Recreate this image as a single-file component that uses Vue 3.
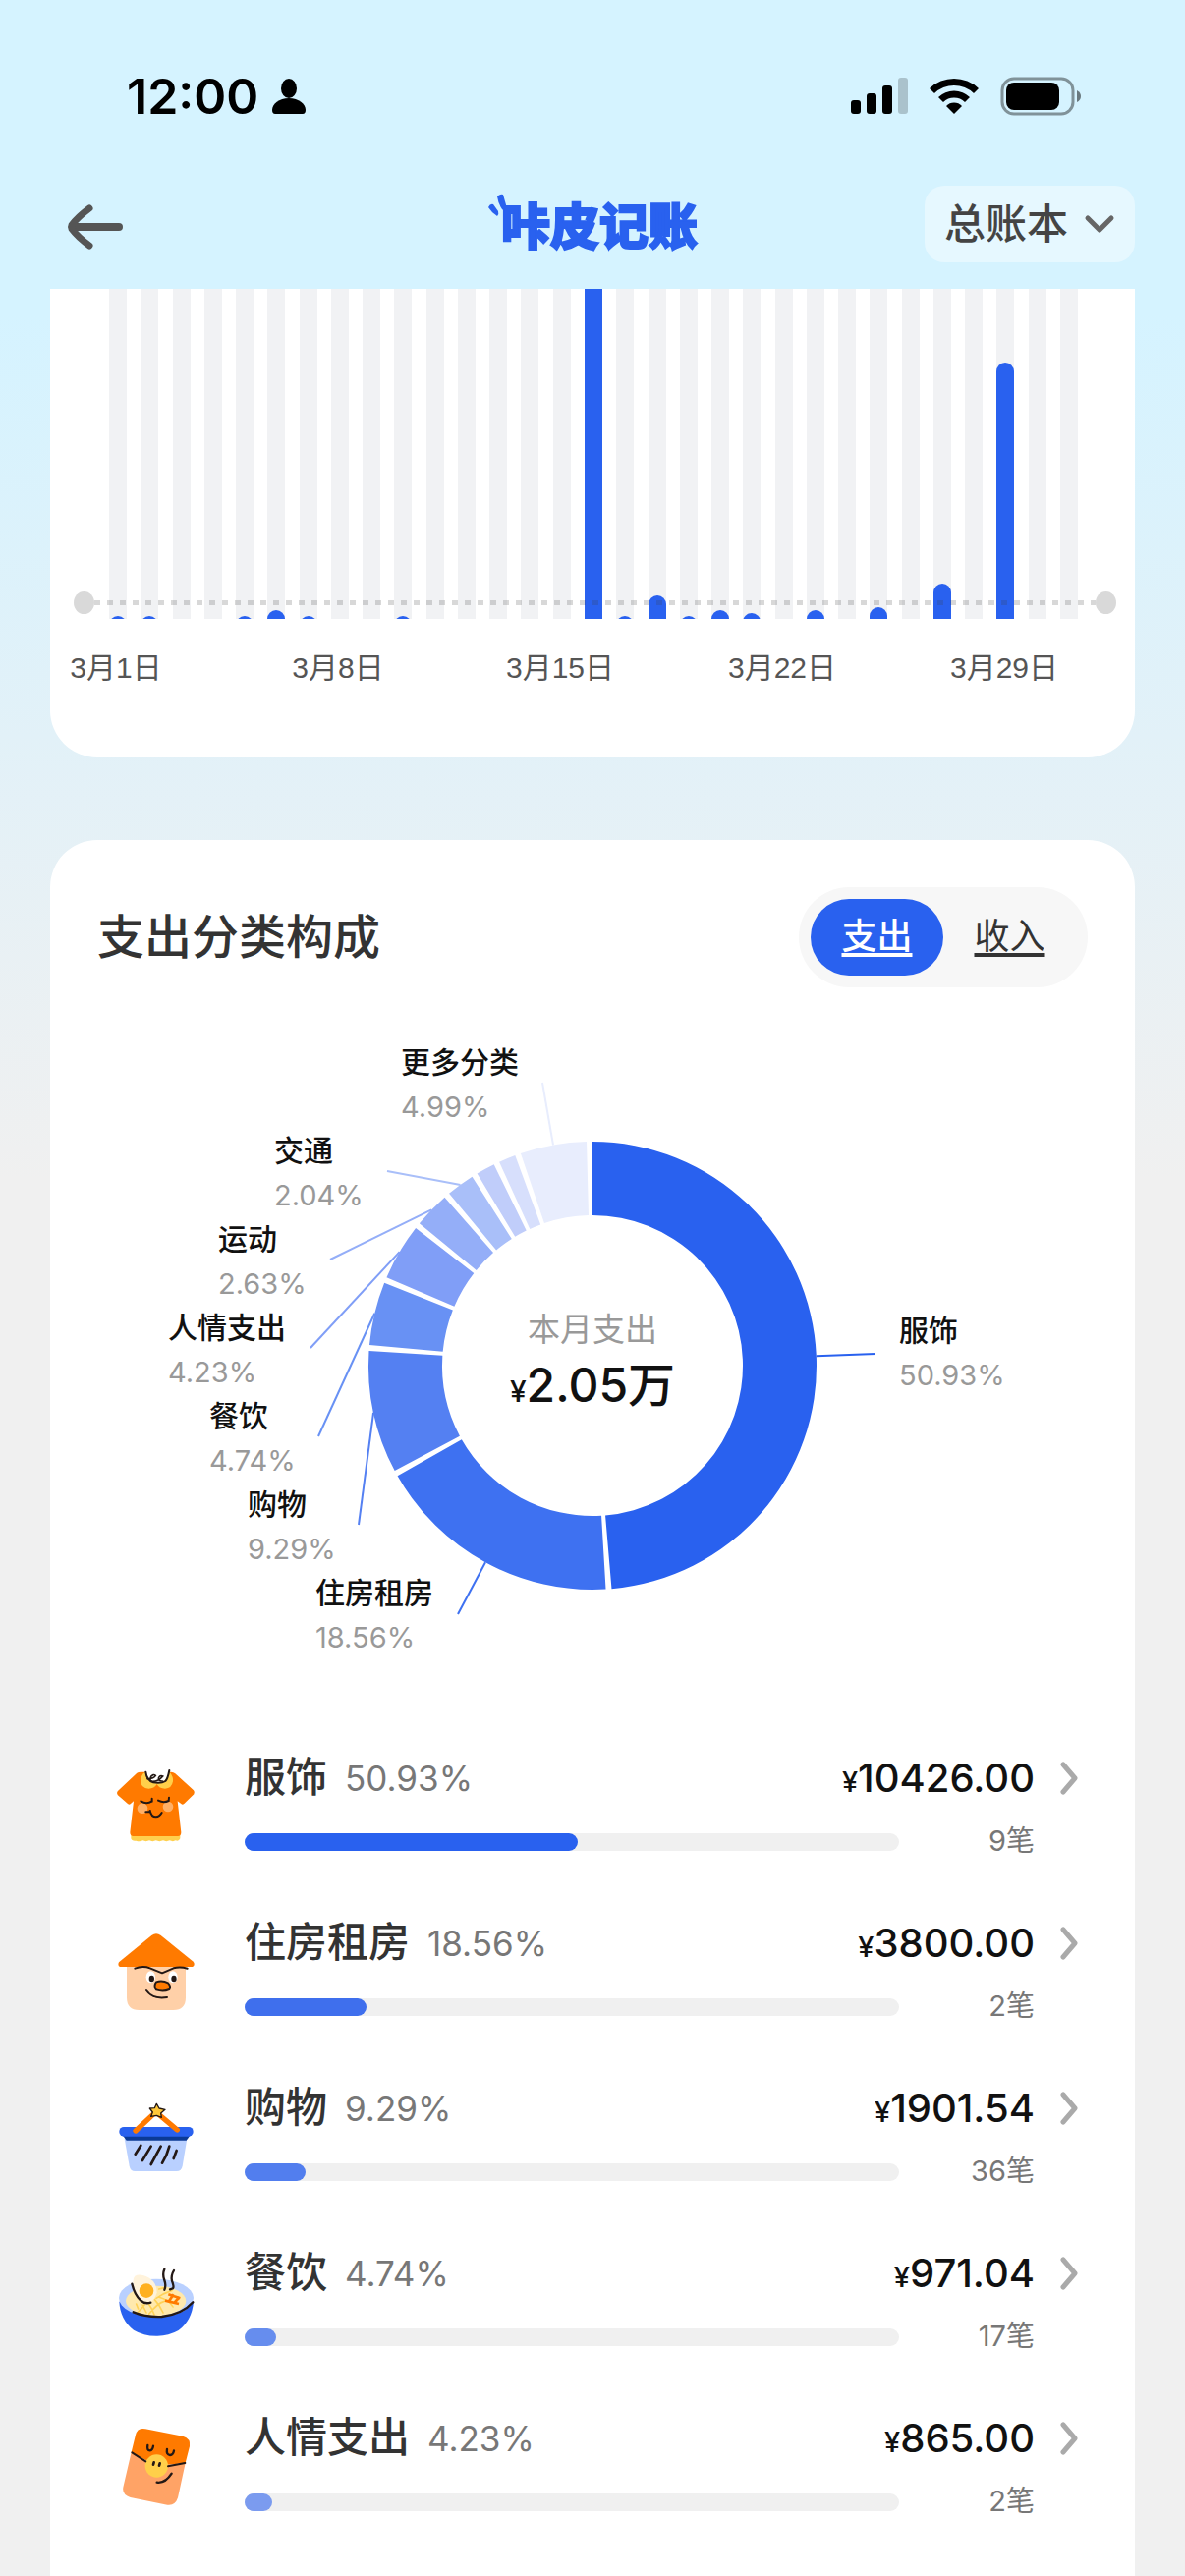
<script setup>
const DAYS = 31
const spend = { 1: 3, 2: 3, 5: 3, 6: 9, 7: 3, 10: 3, 16: 336, 17: 3, 18: 24, 19: 3, 20: 9, 21: 6, 23: 9, 25: 12, 27: 36, 29: 261 }
const bars = Array.from({ length: DAYS }, (_, i) => ({ day: i + 1, height: spend[i + 1] || 0 }))
const ticks = ['3月1日', '3月8日', '3月15日', '3月22日', '3月29日']

// Ring geometry, in chart units; each sweep is in degrees
const CX = 552
const CY = 385
const OUTER = 228
const INNER = 153
const GAP = 1.5

const slices = [
  { sweep: 175.1, color: '#2961ef', name: '服饰', pct: '50.93%', x: 864, y: 360, lx: 840, ly: 373 },
  { sweep: 63.9, color: '#3e71f1', name: '住房租房', pct: '18.56%', x: 270, y: 627, lx: 415, ly: 638 },
  { sweep: 31.8, color: '#5480f2', name: '购物', pct: '9.29%', x: 201, y: 537, lx: 314, ly: 547 },
  { sweep: 16.4, color: '#6891f4', name: '餐饮', pct: '4.74%', x: 162, y: 447, lx: 273, ly: 457 },
  { sweep: 14.7, color: '#809ef7', name: '人情支出', pct: '4.23%', x: 120, y: 357, lx: 265, ly: 367 },
  { sweep: 9.3, color: '#94aef8', name: '运动', pct: '2.63%', x: 171, y: 267, lx: 285, ly: 277 },
  { sweep: 7.3, color: '#a9bff9', name: '交通', pct: '2.04%', x: 228, y: 177, lx: 343, ly: 187 },
  { sweep: 4.9, color: '#c0cdfa' },
  { sweep: 4.4, color: '#d7dffc' },
  { sweep: 17.2, color: '#e8edfd', name: '更多分类', pct: '4.99%', x: 357, y: 87, lx: 501, ly: 97 },
]

const point = (deg, r) => {
  const a = (deg * Math.PI) / 180
  return [CX + r * Math.sin(a), CY - r * Math.cos(a)]
}

let cursor = 0
const ring = slices.map((s) => {
  const start = cursor
  const end = start + s.sweep
  cursor = end + GAP
  const large = s.sweep > 180 ? 1 : 0
  const d = `M${point(start, OUTER)} A${OUTER} ${OUTER} 0 ${large} 1 ${point(end, OUTER)} L${point(end, INNER)} A${INNER} ${INNER} 0 ${large} 0 ${point(start, INNER)} Z`
  const [mx, my] = point((start + end) / 2, OUTER)
  return { ...s, d, mx, my }
})
const labelled = ring.filter((s) => s.name)

const rows = [
  { icon: 'shirt', name: '服饰', pct: '50.93%', width: 50.93, color: '#2961ef', amount: '10426.00', count: '9笔' },
  { icon: 'house', name: '住房租房', pct: '18.56%', width: 18.56, color: '#3f6fed', amount: '3800.00', count: '2笔' },
  { icon: 'basket', name: '购物', pct: '9.29%', width: 9.29, color: '#527eee', amount: '1901.54', count: '36笔' },
  { icon: 'bowl', name: '餐饮', pct: '4.74%', width: 4.74, color: '#668dee', amount: '971.04', count: '17笔' },
  { icon: 'packet', name: '人情支出', pct: '4.23%', width: 4.23, color: '#7b9bef', amount: '865.00', count: '2笔' },
]
</script>

<template>
  <div class="page">
    <div class="status">
      <div class="clock">
        <span>12:00</span>
        <svg width="34" height="38" viewBox="0 0 34 38" aria-hidden="true">
          <ellipse cx="17" cy="11" rx="8" ry="10" />
          <path d="M0 33C0 27 7 21 17 21S34 27 34 33Q34 37 31 37H3Q0 37 0 33Z" />
        </svg>
      </div>
      <div class="radios">
        <svg width="58" height="38" viewBox="0 0 58 38" aria-hidden="true">
          <rect x="0" y="23" width="10" height="14" rx="3" />
          <rect x="16" y="16" width="10" height="21" rx="3" />
          <rect x="32" y="8" width="10" height="29" rx="3" />
          <rect x="48" y="0" width="10" height="37" rx="3" opacity="0.2" />
        </svg>
        <svg width="52" height="38" viewBox="0 0 52 38" aria-hidden="true">
          <path d="M1 11A36 36 0 0 1 51 11L46 16A29 29 0 0 0 6 16Z" />
          <path d="M10 20A23 23 0 0 1 42 20L37 25A16 16 0 0 0 15 25Z" />
          <path d="M18 29A11 11 0 0 1 34 29L26 37Z" />
        </svg>
        <svg width="83" height="40" viewBox="0 0 83 40" aria-hidden="true">
          <rect x="2" y="2" width="72" height="36" rx="12" fill="none" stroke="#000" stroke-width="3" opacity="0.4" />
          <rect x="6" y="6" width="54" height="28" rx="8" />
          <path d="M78 14Q82 16 82 20T78 26Z" opacity="0.5" />
        </svg>
      </div>
    </div>

    <header class="nav">
      <button class="back" type="button" aria-label="返回">
        <svg width="60" height="48" viewBox="0 0 60 48" fill="none" stroke="#555" stroke-width="8" stroke-linecap="round" stroke-linejoin="round">
          <path d="M54 24H8" />
          <path d="M24 5Q12 14 6 22Q5 24 6 26Q12 34 24 43" stroke-width="7" />
        </svg>
      </button>
      <h1 class="logo">
        <svg class="spark" width="22" height="24" viewBox="0 0 22 24" aria-hidden="true">
          <path d="M10 3Q13 0 16 1L20 15Q18 19 15 16Q11 10 10 3Z" />
          <path d="M1 14Q3 10 6 11L11 18Q12 21 10 23Q4 19 1 14Z" />
        </svg>
        <span>咔皮记账</span>
      </h1>
      <button class="ledger" type="button">
        总账本
        <svg width="32" height="20" viewBox="0 0 32 20" fill="none" stroke="#666" stroke-width="5" stroke-linecap="round" stroke-linejoin="round">
          <path d="M4 4L16 16L28 4" />
        </svg>
      </button>
    </header>

    <section class="card trend">
      <div class="plot">
        <div v-for="b in bars" :key="b.day" class="slot">
          <div v-if="b.height" class="bar" :style="{ height: b.height + 'px' }"></div>
        </div>
        <div class="average"></div>
      </div>
      <div class="ticks">
        <span v-for="t in ticks" :key="t" class="tick">{{ t }}</span>
      </div>
    </section>

    <section class="card breakdown">
      <div class="head">
        <h2>支出分类构成</h2>
        <div class="toggle">
          <button type="button" class="option active">支出</button>
          <button type="button" class="option">收入</button>
        </div>
      </div>

      <svg class="donut" viewBox="0 0 1104 749" role="img" aria-label="支出分类构成">
        <path v-for="(s, i) in ring" :key="i" :d="s.d" :fill="s.color" />
        <g v-for="s in labelled" :key="s.name">
          <line :x1="s.mx" :y1="s.my" :x2="s.lx" :y2="s.ly" :stroke="s.color" stroke-width="2" />
          <text class="slice-name" :x="s.x" :y="s.y">{{ s.name }}</text>
          <text class="slice-pct" :x="s.x" :y="s.y + 45">{{ s.pct }}</text>
        </g>
        <text class="total-label" :x="CX" y="360">本月支出</text>
        <text class="total" :x="CX" y="422"><tspan class="total-yen">¥</tspan>2.05万</text>
      </svg>

      <ul class="list">
        <li v-for="r in rows" :key="r.name">
          <a class="row" href="#">
            <svg v-if="r.icon === 'shirt'" class="icon" viewBox="102 99 270 270" aria-hidden="true">
              <path d="M160 318H310V334Q306 344 296 340Q288 345 278 340Q268 345 258 340Q247 345 236 340Q226 345 216 340Q206 345 196 340Q186 345 176 341Q162 343 160 334Z" fill="#ffd04d" />
              <path d="M178 134Q182 131 190 131H282Q290 131 295 136L351 187Q356 193 352 199L322 228Q317 232 313 228L302 220L313 315Q313 327 303 327H167Q157 327 157 315L168 220L158 229Q154 232 150 228L119 201Q115 195 119 190Z" fill="#ff7a00" />
              <path d="M191 148Q196 132 206 131H278Q290 146 288 160Q284 182 264 182Q246 182 239 168Q231 182 214 182Q190 180 189 158Z" fill="#ffcf4a" />
              <path d="M207 128Q206 163 240 165Q270 164 275 128Z" fill="#fff" />
              <circle cx="195" cy="242" r="16" fill="#ffb066" />
              <circle cx="273" cy="237" r="16" fill="#ffb066" />
              <g fill="none" stroke="#231815" stroke-width="6" stroke-linecap="round">
                <path d="M205 131Q208 157 228 163Q252 167 265 159Q272 152 277 126" />
                <path d="M210 152Q230 151 235 142Q228 136 221 145Q214 158 226 160Q244 160 257 144Q248 140 244 150Q244 160 256 159" stroke-width="5" />
                <path d="M190 220Q208 231 224 220M224 212V221M243 218Q260 227 275 219L276 209" />
                <path d="M205 253L217 253Q217 249 218 249Q222 268 236 268Q247 267 254 255" />
              </g>
            </svg>

            <svg v-else-if="r.icon === 'house'" class="icon" viewBox="102 603 270 270" aria-hidden="true">
              <path d="M147 715H327V820Q327 858 289 858H185Q147 858 147 820Z" fill="#ffd0a8" />
              <path d="M223 630Q237 619 251 630L350 710Q357 720 348 726H126Q118 722 123 712Z" fill="#ff7a00" />
              <ellipse cx="220" cy="757" rx="14" ry="18" fill="#fff" />
              <ellipse cx="288" cy="757" rx="14" ry="18" fill="#fff" />
              <ellipse cx="223" cy="762" rx="8" ry="10" fill="#231815" />
              <ellipse cx="291" cy="762" rx="8" ry="10" fill="#231815" />
              <g fill="none" stroke="#231815" stroke-width="6" stroke-linecap="round" stroke-linejoin="round">
                <path d="M172 731Q196 722 218 730L255 745L290 730Q310 725 332 731" />
                <path d="M237 772Q256 766 273 775Q283 785 277 795Q258 803 237 796Q228 784 237 772Z" fill="#ff7a00" />
                <path d="M207 798Q227 826 270 819" />
              </g>
            </svg>

            <svg v-else-if="r.icon === 'basket'" class="icon" viewBox="102 87 270 270" aria-hidden="true">
              <path d="M140 230H331L317 314Q314 330 299 330H172Q158 330 155 314Z" fill="#b9d0ff" />
              <path d="M134 220H341L329 236H146Z" fill="#0b3a96" />
              <rect x="124" y="195" width="226" height="29" rx="14" fill="#2961ef" />
              <path d="M174 207L236 149L301 204" fill="none" stroke="#ff7a00" stroke-width="16" stroke-linecap="round" stroke-linejoin="round" />
              <path d="M238 124L246 138L264 142L251 153L253 166L238 160L221 163L226 150L217 138L232 137Z" fill="#ffc738" stroke="#231815" stroke-width="4" stroke-linejoin="round" />
              <path d="M190 251L173 278M221 254L195 297M251 254L221 309M277 254Q270 282 255 305M299 267L290 291" fill="none" stroke="#231815" stroke-width="8" stroke-linecap="round" />
            </svg>

            <svg v-else-if="r.icon === 'bowl'" class="icon" viewBox="102 591 270 270" aria-hidden="true">
              <path d="M124 728H351Q346 785 305 816Q273 834 237 833Q198 833 168 815Q127 783 124 728Z" fill="#2961ef" />
              <ellipse cx="237" cy="717" rx="114" ry="58" fill="#b9d0ff" />
              <ellipse cx="236" cy="726" rx="92" ry="46" fill="#ffe9ad" />
              <path d="M176 735L182 750M195 738L207 762M212 732Q224 748 231 768M232 722Q247 738 258 762M244 714Q278 724 288 744M180 762Q196 745 201 738M215 766Q240 733 262 727M237 718Q260 702 285 694M245 690L262 686" fill="none" stroke="#ffd257" stroke-width="5" stroke-linecap="round" />
              <path d="M172 650Q187 641 216 656Q239 671 239 700Q233 728 211 732Q187 730 174 700Q159 663 172 650Z" fill="#fff3dc" />
              <circle cx="207" cy="695" r="22" fill="#ffb01f" />
              <path d="M274 706L310 718M264 725L306 735M290 706L274 730M308 714L292 732" stroke="#ff7a00" stroke-width="8" />
              <g fill="none" stroke="#231815" stroke-width="7" stroke-linecap="round">
                <path d="M163 674Q171 707 189 724Q203 737 220 731" />
                <path d="M167 760Q205 776 254 774Q317 767 349 730" />
                <path d="M262 629Q255 645 262 663Q268 680 262 692M291 633Q281 649 285 665Q292 683 288 688L279 691" />
              </g>
            </svg>

            <svg v-else class="icon" viewBox="102 195 270 270" aria-hidden="true">
              <path d="M174 235Q180 211 204 217L318 239Q343 246 339 270L326 321L238 330L161 288Z" fill="#ff7a00" />
              <path d="M161 288L205 315L238 330L326 321L303 427Q295 452 271 449L158 426Q132 418 136 395Z" fill="#ffa366" />
              <circle cx="238" cy="330" r="35" fill="#ffcf4a" />
              <g fill="none" stroke="#231815" stroke-width="7" stroke-linecap="round">
                <path d="M163 289L205 316M273 331L325 321" stroke-width="6" />
                <path d="M211 267Q208 283 218 283Q226 282 228 269M270 279Q267 296 279 297Q289 296 291 283" />
                <path d="M230 319L228 326M248 322L246 329" stroke-width="8" />
                <path d="M239 380Q264 384 284 353" />
              </g>
            </svg>

            <div class="body">
              <div class="line top">
                <span class="name">{{ r.name }}</span>
                <span class="pct">{{ r.pct }}</span>
                <span class="amount"><small>¥</small>{{ r.amount }}</span>
                <svg class="chevron" width="18" height="34" viewBox="0 0 18 34" fill="none" stroke="#aaa" stroke-width="5" stroke-linecap="round" stroke-linejoin="round" aria-hidden="true">
                  <path d="M3 3L15 17L3 31" />
                </svg>
              </div>
              <div class="line bottom">
                <div class="track">
                  <div class="fill" :style="{ width: r.width + '%', background: r.color }"></div>
                </div>
                <span class="count">{{ r.count }}</span>
              </div>
            </div>
          </a>
        </li>
      </ul>
    </section>
  </div>
</template>

<style>
body {
  background: #f0f0f0;
}
</style>

<style scoped>
.page {
  box-sizing: border-box;
  min-height: 100vh;
  display: flex;
  flex-direction: column;
  padding: 0 51px;
  background: linear-gradient(180deg, #d5f3ff 0, #d5f3ff 320px, #e2f1f8 750px, #f0f0f0 1200px);
  font-family: Inter, "Noto Sans CJK SC", sans-serif;
  line-height: 1.2;
  color: #333;
}

button {
  border: 0;
  padding: 0;
  background: none;
  color: inherit;
  font: inherit;
}

h1,
h2,
ul {
  margin: 0;
  padding: 0;
}

svg {
  display: block;
  flex: none;
}

.status {
  display: flex;
  justify-content: space-between;
  align-items: center;
  height: 60px;
  padding: 68px 54px 0 78px;
  color: #000;
}

.clock {
  display: flex;
  align-items: center;
  gap: 14px;
  font-size: 50px;
  font-weight: 600;
}

.radios {
  display: flex;
  align-items: center;
  gap: 21px;
}

.nav {
  display: grid;
  grid-template-columns: 1fr auto 1fr;
  align-items: center;
  height: 78px;
  padding: 61px 0 27px;
}

.back {
  justify-self: start;
  margin: 6px 0 0 16px;
}

.logo {
  display: flex;
  align-items: flex-start;
  padding-top: 6px;
  color: #2961ef;
  font-size: 50px;
  line-height: 68px;
  font-weight: 900;
  -webkit-text-stroke: 2px #2961ef;
}

.spark {
  margin-right: -8px;
  fill: #2961ef;
}

.ledger {
  justify-self: end;
  display: flex;
  align-items: center;
  gap: 16px;
  height: 78px;
  padding: 0 20px;
  border-radius: 20px;
  background: rgba(255, 255, 255, 0.4);
  color: #444;
  font-size: 42px;
  font-weight: 500;
}

.card {
  background: #fff;
}

.trend {
  border-radius: 0 0 48px 48px;
  height: 477px;
}

.plot {
  position: relative;
  display: flex;
  justify-content: space-between;
  height: 336px;
  padding: 0 58px 0 60px;
}

.slot {
  display: flex;
  align-items: flex-end;
  width: 18px;
  background: #f1f2f4;
}

.bar {
  width: 18px;
  overflow: hidden;
}

.bar::before {
  content: "";
  display: block;
  height: 100%;
  min-height: 18px;
  border-radius: 9px 9px 0 0;
  background: #2961ef;
}

.slot:nth-child(16) .bar::before {
  border-radius: 0;
}

.average {
  position: absolute;
  left: 45px;
  right: 40px;
  bottom: 14px;
  height: 5px;
  background: repeating-linear-gradient(90deg, rgba(60, 60, 60, 0.2) 0 6px, transparent 6px 13px);
}

.average::before,
.average::after {
  content: "";
  position: absolute;
  top: -9px;
  width: 21px;
  height: 23px;
  border-radius: 50%;
  background: #d9d9d9;
}

.average::before {
  right: 100%;
}

.average::after {
  left: 100%;
}

.ticks {
  display: flex;
  justify-content: space-between;
  padding: 27px 133px 0 67px;
  color: #555;
  font: 30px/45px "Liberation Sans", "Noto Sans CJK SC", sans-serif;
}

.tick {
  display: flex;
  justify-content: center;
  width: 0;
  white-space: nowrap;
}

.breakdown {
  flex: 1;
  margin-top: 84px;
  padding: 48px 0 28px;
  border-radius: 48px 48px 0 0;
}

.head {
  display: flex;
  justify-content: space-between;
  align-items: center;
  padding: 0 48px;
}

h2 {
  font-size: 48px;
  line-height: 60px;
  font-weight: 500;
}

.toggle {
  display: flex;
  padding: 12px;
  border-radius: 51px;
  background: #f7f7f7;
}

.option {
  width: 135px;
  height: 78px;
  border-radius: 39px;
  font-size: 36px;
  text-decoration: underline;
  text-decoration-thickness: 4px;
  text-underline-offset: 4px;
  text-decoration-skip-ink: none;
}

.option.active {
  background: #2961ef;
  color: #fff;
  font-weight: 500;
}

.donut {
  width: 100%;
}

.slice-name {
  font-size: 30px;
  font-weight: 500;
  fill: #111;
}

.slice-pct {
  font-size: 29px;
  fill: #999;
}

.total-label {
  font-size: 33px;
  fill: #999;
  text-anchor: middle;
}

.total {
  font-size: 48px;
  font-weight: 500;
  fill: #111;
  text-anchor: middle;
}

.total-yen {
  font-size: 30px;
}

.list {
  list-style: none;
}

.row {
  display: flex;
  align-items: center;
  gap: 45px;
  height: 168px;
  padding: 0 58px 0 63px;
  color: inherit;
  text-decoration: none;
}

.icon {
  width: 90px;
  height: 90px;
}

.body {
  flex: 1;
  display: flex;
  flex-direction: column;
  gap: 21px;
}

.line {
  display: flex;
  align-items: center;
}

.top {
  height: 52px;
}

.name {
  font-size: 42px;
  font-weight: 500;
}

.pct {
  margin-left: 18px;
  color: #777;
  font-size: 35px;
}

.amount {
  margin-left: auto;
  color: #111;
  font-size: 40px;
  font-weight: 500;
}

.amount small {
  font-size: 29px;
}

.chevron {
  margin-left: 26px;
}

.bottom {
  height: 36px;
}

.track {
  flex: 1;
  height: 18px;
  border-radius: 9px;
  background: #f0f0f0;
}

.fill {
  height: 100%;
  border-radius: 9px;
}

.count {
  width: 138px;
  margin-right: 44px;
  color: #777;
  font-size: 29px;
  text-align: right;
}
</style>
